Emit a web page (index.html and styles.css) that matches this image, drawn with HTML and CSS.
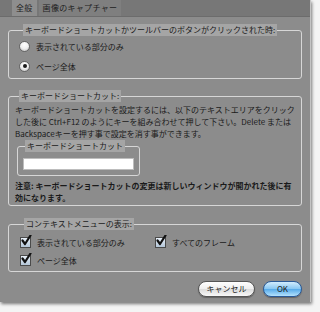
FILE: index.html
```html
<!DOCTYPE html>
<html lang="ja">
<head>
<meta charset="utf-8">
<link rel="stylesheet" href="styles.css">
</head>
<body>
<div class="dialog">
  <div class="tabs">
    <span class="tab active">全般</span>
    <span class="tab">画像のキャプチャー</span>
  </div>
  <div class="content">
    <fieldset class="group g1">
      <legend>キーボードショートカットかツールバーのボタンがクリックされた時:</legend>
      <label class="opt"><span class="radio"></span>表示されている部分のみ</label>
      <label class="opt"><span class="radio on"></span>ページ全体</label>
    </fieldset>
    <fieldset class="group g2">
      <legend>キーボードショートカット:</legend>
      <p class="desc">キーボードショートカットを設定するには、以下のテキストエリアをクリック<br>した後に Ctrl+F12 のようにキーを組み合わせて押して下さい。Delete または<br>Backspaceキーを押す事で設定を消す事ができます。</p>
      <fieldset class="inner">
        <legend>キーボードショートカット</legend>
        <div class="field"></div>
      </fieldset>
      <p class="note">注意: キーボードショートカットの変更は新しいウィンドウが開かれた後に有<br>効になります。</p>
    </fieldset>
    <fieldset class="group g3">
      <legend>コンテキストメニューの表示:</legend>
      <div class="checks">
        <label class="opt"><span class="check"><svg viewBox="0 0 12 12" width="12" height="12"><path d="M2.5 5.5 L5 9 L10.5 0.5" fill="none" stroke="#111" stroke-width="2.2" stroke-linecap="round" stroke-linejoin="round"/></svg></span>表示されている部分のみ</label>
        <label class="opt"><span class="check"><svg viewBox="0 0 12 12" width="12" height="12"><path d="M2.5 5.5 L5 9 L10.5 0.5" fill="none" stroke="#111" stroke-width="2.2" stroke-linecap="round" stroke-linejoin="round"/></svg></span>すべてのフレーム</label>
        <label class="opt"><span class="check"><svg viewBox="0 0 12 12" width="12" height="12"><path d="M2.5 5.5 L5 9 L10.5 0.5" fill="none" stroke="#111" stroke-width="2.2" stroke-linecap="round" stroke-linejoin="round"/></svg></span>ページ全体</label>
      </div>
    </fieldset>
    <div class="buttons">
      <span class="btn cancel">キャンセル</span>
      <span class="btn ok">OK</span>
    </div>
  </div>
</div>
</body>
</html>
```
FILE: styles.css
```css
html, body {
  margin: 0;
  padding: 0;
  background: #f4f4f4;
  width: 320px;
  height: 312px;
  overflow: hidden;
}
body {
  font-family: "Noto Sans CJK JP", "Liberation Sans", sans-serif;
  font-size: 8px;
  color: #1a1a1a;
}
.dialog {
  width: 310px;
  height: 302px;
  background: #8c8c8c;
  border-right: 1px solid #c4c4c4;
  box-shadow: 1px 2px 3px rgba(0,0,0,0.5);
  display: flex;
  flex-direction: column;
}
.tabs {
  height: 16px;
  background: #777777;
  display: flex;
  padding-left: 12px;
  gap: 2px;
  border-bottom: 1px solid #6c6c6c;
  flex-shrink: 0;
}
.tab {
  line-height: 16px;
  padding: 0 4px;
  color: #1e1e1e;
  background: #7f7f7f;
  white-space: nowrap;
  letter-spacing: 0.3px;
}
.tab.active {
  background: #8e8e8e;
  padding: 0 4px;
}
.content {
  padding: 7px 8px 0 8px;
  display: flex;
  flex-direction: column;
}
fieldset {
  margin: 0;
  padding: 0;
  border: 1px solid #d6d6d6;
  border-radius: 3px;
  min-width: 0;
}
legend {
  background: #a5a5a5;
  padding: 0 2px;
  margin-left: 4px;
  line-height: 12px;
  height: 12px;
  white-space: nowrap;
}
.g1 {
  padding: 0 0 2px 10px;
}
.g1 .opt {
  height: 20px;
}
.opt {
  display: flex;
  align-items: center;
  gap: 6px;
  white-space: nowrap;
}
.radio {
  width: 9px;
  height: 9px;
  border-radius: 50%;
  background: radial-gradient(circle at 50% 30%, #ffffff 0%, #f0f0f0 50%, #b8b8b8 100%);
  border: 1px solid #666;
  position: relative;
  flex-shrink: 0;
}
.radio.on::after {
  content: "";
  position: absolute;
  left: 2.5px;
  top: 2.5px;
  width: 4px;
  height: 4px;
  border-radius: 50%;
  background: #1a1a1a;
}
.g2 {
  margin-top: 11px;
  padding: 0 0 1px 6px;
}
.desc {
  margin: 2px 0 0 0;
  line-height: 12px;
  white-space: nowrap;
}
.inner {
  width: 123px;
  margin: 0 0 0 2px;
  padding: 0 5px 5px 5px;
  box-sizing: border-box;
}
.inner legend {
  margin-left: 2px;
}
.field {
  height: 10px;
  background: #fff;
  border: 1px solid #bdbdbd;
  margin-top: 6px;
}
.note {
  margin: 4px 0 0 0;
  font-weight: bold;
  line-height: 12px;
  white-space: nowrap;
}
.g3 {
  margin-top: 12px;
  padding: 0 0 2px 11px;
}
.checks {
  display: grid;
  grid-template-columns: 135px auto;
  grid-auto-rows: 18px;
  margin-top: 3px;
}
.check {
  width: 9px;
  height: 9px;
  background: linear-gradient(#e8f0f8, #b4c6d8);
  border: 1px solid #4a4a4a;
  position: relative;
  flex-shrink: 0;
}
.check svg {
  position: absolute;
  left: -1px;
  top: -3px;
}
.buttons {
  display: flex;
  justify-content: flex-end;
  gap: 8px;
  margin-top: 9px;
}
.btn {
  height: 14px;
  line-height: 14px;
  border-radius: 8px;
  text-align: center;
  border: 1px solid #555;
  box-shadow: 0 1px 1px rgba(0,0,0,0.3);
}
.cancel {
  width: 55px;
  background: linear-gradient(#ffffff, #eeeeee 50%, #dcdcdc 51%, #f8f8f8);
}
.ok {
  width: 37px;
  border-color: #2a5a98;
  background: linear-gradient(#d2ecfd, #86c6f2 50%, #55aaea 51%, #b4e2fd);
}
```
